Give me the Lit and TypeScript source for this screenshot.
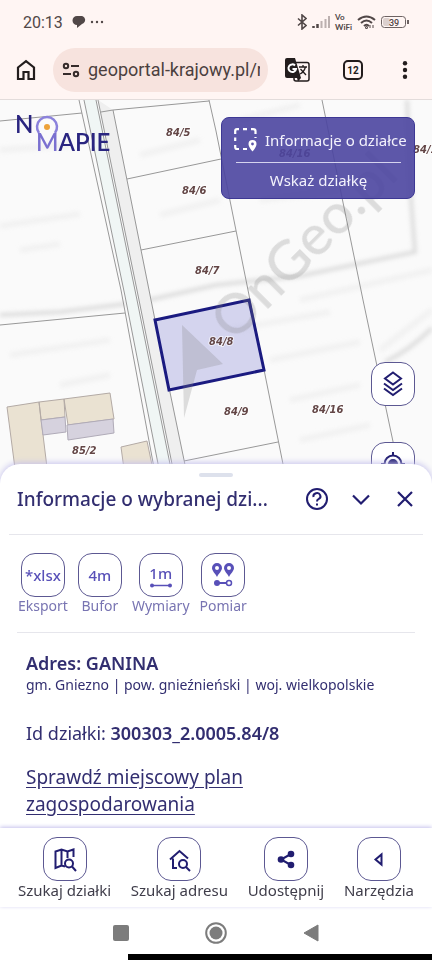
import { LitElement, html, svg, css } from "lit";
import { customElement } from "lit/decorators.js";

const parcelLabels: [number, number, string][] = [
  [166, 136, "84/5"],
  [182, 194, "84/6"],
  [195, 274, "84/7"],
  [209, 345, "84/8"],
  [224, 415, "84/9"],
  [312, 413, "84/16"],
  [279, 157, "84/16"],
  [413, 153, "84/1"],
  [72, 454, "85/2"],
];

const boundaries = [
  "M0 121L82 113",
  "M101 112L113 110L209 101",
  "M79 100L121 290L157 484",
  "M84 100L125 296L162 484",
  "M96 100L137 300L174 484",
  "M98 100L139 300L176 484",
  "M113 110L155 320L189 484",
  "M209 100L216 131L250 300L287 484",
  "M127 179L221 159",
  "M141 250L236 231",
  "M184 461L278 442",
  "M322 100L363 300L402 484",
  "M0 325L125 313",
];

@customElement("map-canvas")
export class MapCanvas extends LitElement {
  static styles = css`
    :host { display: block; }
    .map { display: block; width: 100%; height: 100%; background: #fafafa; }
    .relief { fill: none; stroke: #c4c4c4; stroke-width: 4; opacity: 0.55; filter: url(#soft); }
    .relief-light { fill: none; stroke: #ececec; stroke-width: 6; opacity: 0.6; filter: url(#soft); }
    .road { fill: #f0f6f5; }
    .verge { fill: #efefef; }
    .edge { fill: none; stroke: #989898; stroke-width: 1; }
    .house { fill: #eae2d2; stroke: #b3aaa5; stroke-width: 1; }
    .annex { fill: #d6d2de; stroke: #b0abb8; stroke-width: 1; }
    .mark { fill: #808080; opacity: 0.25; font: 500 56px Lato, sans-serif; }
    .selected { fill: #7070d0; fill-opacity: 0.27; stroke: #1a1a80; stroke-width: 3; }
    .label { font: italic bold 10px "DejaVu Sans", sans-serif; fill: #634646; stroke: #fff; stroke-width: 2; stroke-opacity: 0.6; paint-order: stroke; }
  `;

  render() {
    return html`<svg class="map" viewBox="0 100 432 384" preserveAspectRatio="xMidYMin slice" role="img" aria-label="Mapa działek">
      <defs><filter id="soft" x="-10%" y="-30%" width="120%" height="160%"><feGaussianBlur stdDeviation="2" /></filter></defs>
      <path class="relief-light" d="M0 150L70 145M0 226L80 214M20 250L60 244M10 355L110 340M60 385L110 375M270 360L360 342M290 400L360 385M230 330L330 312M140 155L200 140M160 215L220 200M240 120L300 105M260 200L340 190M300 300L432 270M380 350L432 310M300 440L370 425" />
      <path class="relief" d="M0 315L60 312L125 304M140 302L216 285L300 276L415 252L411 200L407 100" />
      <path class="relief" d="M385 362Q410 350 432 328" />
      <path class="verge" d="M98 100L113 110L189 484L176 484Z" />
      <path class="road" d="M84 100L96 100L137 300L174 484L162 484L125 296Z" />
      ${boundaries.map((d) => svg`<path class="edge" d=${d} />`)}
      <path class="house" d="M7 407L39 402L49 484H17ZM39 402L64 399L65 417L41 420ZM64 399L110 393L114 419L68 425ZM121 447L147 441L156 484H126Z" />
      <path class="annex" d="M41 420L65 417L66 432L43 435ZM67 425L113 419L114 433L68 440Z" />
      <path class="selected" d="M155 320L249 300L264 370L169 390Z" />
      <g class="mark">
        <path d="M182 325L223 364L197 370L184 418Z" />
        <text transform="translate(234 343) rotate(-45)">OnGeo.pl</text>
      </g>
      ${parcelLabels.map(([x, y, t]) => svg`<text class="label" x=${x} y=${y}>${t}</text>`)}
    </svg>`;
  }
}

const pin = (x: number) => svg`<path fill="#5850b8" fill-rule="evenodd" d="M${x} 10a5 5 0 0 0-5 5c0 3 3 5 5 9c2-4 5-6 5-9a5 5 0 0 0-5-5zm0 3a2 2 0 1 1 0 4a2 2 0 0 1 0-4z" />`;

const tools = [
  { label: "Eksport", face: html`<span class="glyph">*xlsx</span>` },
  { label: "Bufor", face: html`<span class="glyph">4m</span>` },
  {
    label: "Wymiary",
    face: html`<span class="stack"><span class="glyph">1m</span><svg width="24" height="5" viewBox="0 0 24 5"><path d="M2 2.500H22" stroke="#5850b8" stroke-width="1.500" /><circle cx="3" cy="2.500" r="2" fill="#5850b8" /><circle cx="21" cy="2.500" r="2" fill="#5850b8" /></svg></span>`,
  },
  {
    label: "Pomiar",
    face: html`<svg width="44" height="44" viewBox="0 0 44 44">${pin(16)}${pin(28)}<path d="M16 30H25" stroke="#5850b8" stroke-width="2" /><circle cx="16" cy="30" r="3" fill="#5850b8" /><circle cx="28" cy="30" r="2.500" fill="none" stroke="#5850b8" stroke-width="1.500" /></svg>`,
  },
];

const actions = [
  {
    label: "Szukaj działki",
    icon: svg`<path d="M22 29.500L18.500 28.500L12.500 31V14.500L18.500 12.500L24.500 14.500L30.500 12.500V20M18.500 12.500V28.500M24.500 14.500V21" /><circle cx="26" cy="26.500" r="4" /><path d="M29 29.500L33 34" />`,
  },
  {
    label: "Szukaj adresu",
    icon: svg`<path d="M20 31H16V21.500M13 22.500L22.500 14L31 21.500" /><circle cx="26" cy="27" r="4" /><path d="M29 30l4 4" />`,
  },
  {
    label: "Udostępnij",
    icon: svg`<path d="M27 17L17 22.500L27 28" /><g fill="#211d70" stroke="none"><circle cx="27" cy="17" r="3.300" /><circle cx="17" cy="22.500" r="3.300" /><circle cx="27" cy="28" r="3.300" /></g>`,
  },
  { label: "Narzędzia", icon: svg`<path d="M24.500 17.500V27.500L18.500 22.500Z" />` },
];

@customElement("app-root")
export class AppRoot extends LitElement {
  static styles = css`
    :host {
      display: flex; flex-direction: column; min-height: 100vh; background: #fff;
      font-family: "Noto Sans", sans-serif; color: #322e70;
    }
    * { box-sizing: border-box; }
    svg { display: block; flex: none; }
    button { font: inherit; color: inherit; background: none; border: 0; padding: 0; cursor: pointer; }
    p, h1, h2 { margin: 0; }

    .status {
      display: flex; align-items: center; height: 40px; padding: 4px 23px 0; gap: 5px;
      background: #fff5f3; color: #514747; font: 16px Roboto, sans-serif;
    }
    .clock { margin-right: 4px; }
    .spacer { flex: 1; }
    .vo { display: flex; flex-direction: column; font: 700 8px/10px Lato, sans-serif; }
    .browser {
      display: flex; align-items: center; height: 60px; padding: 0 16px; gap: 17px;
      background: #fff5f3; border-bottom: 1px solid #e3dcdb; color: #231d1d;
    }
    .address {
      display: flex; align-items: center; gap: 8px; flex: 1; min-width: 0; height: 44px;
      padding: 0 8px 0 9px; border-radius: 22px; background: #f7e3de;
    }
    .url {
      flex: 1; min-width: 0; border: 0; padding: 0; background: none; outline: none;
      font: 18px Roboto, sans-serif; color: #4b3f3e;
    }
    .right { display: flex; align-items: center; gap: 33px; }

    .stage { position: relative; flex: 1; min-height: 200px; margin-bottom: -20px; overflow: hidden; }
    .canvas { position: absolute; inset: 0; }
    .brand { position: absolute; left: 12px; top: 8px; }
    .logo { font: 600 24px Lato, sans-serif; fill: #2a2580; }
    .logo-m { fill: #7a70d0; }
    .hint {
      position: absolute; right: 17px; top: 17px; width: 194px; height: 82px; padding: 8px 9px 0 12px;
      border: 1px solid #3d3894; border-radius: 8px; background: rgba(75, 69, 160, 0.9);
      color: #f3f2fc; font-size: 15px; line-height: 28px;
    }
    .hint-row { display: flex; align-items: center; gap: 7px; white-space: nowrap; }
    .hint-foot { margin: 8px 4px 0 2px; border-top: 1px solid #d5d3ee; line-height: 34px; text-align: center; }
    .map-tools { position: absolute; right: 17px; top: 262px; display: flex; flex-direction: column; gap: 36px; }
    .square {
      display: flex; align-items: center; justify-content: center; width: 44px; height: 44px;
      border: 1px solid #5c5892; border-radius: 14px; background: #fff;
    }

    .sheet { position: relative; padding: 9px 9px 10px; border-radius: 20px 20px 0 0; background: #fff; box-shadow: 0 -1px 6px #c4c0ec; }
    .handle { width: 34px; height: 4px; margin: 0 auto; border-radius: 2px; background: #dde1ec; }
    .head { display: flex; align-items: center; height: 44px; padding: 0 6px 0 8px; }
    .title { flex: 1; font-size: 19px; font-weight: 500; white-space: nowrap; }
    .head-actions { display: flex; align-items: center; gap: 20px; }
    .tools { display: flex; gap: 10px; margin-top: 13px; padding: 18px 9px; border-top: 1px solid #e6e6ec; color: #7874b2; }
    .tool { display: flex; flex-direction: column; align-items: center; font-size: 14px; line-height: 17px; }
    .glyph { font-size: 15px; line-height: 20px; font-weight: 500; color: #5850b8; }
    .stack { display: flex; flex-direction: column; align-items: center; }
    .details { margin: 0 8px; padding: 18px 9px 0; border-top: 1px solid #e6e6ec; font-size: 18px; line-height: 27px; }
    .name { font-size: 18px; font-weight: 600; line-height: 24px; }
    .region { font-size: 14px; line-height: 20px; }
    .parcel { margin: 25px 0 17px; }
    .parcel strong { font-weight: 600; }
    .link { display: block; max-width: 260px; color: inherit; font-size: 19px; text-underline-offset: 3px; }

    .nav {
      position: relative; display: flex; justify-content: space-between; padding: 9px 18px 8px; background: #fff;
      box-shadow: 0 -1px 4px #c4c0ec; color: #3f3d4a;
    }
    .action { display: flex; flex-direction: column; align-items: center; font-size: 15px; line-height: 18px; white-space: nowrap; }
    .stroke { fill: none; stroke: #211d70; stroke-width: 2; }
    .system { display: flex; justify-content: center; align-items: center; gap: 76px; height: 47px; padding-top: 4px; }
    .strip { height: 6px; margin-left: 128px; background: #000; }
  `;

  render() {
    return html`
      <header class="status">
        <span class="clock">20:13</span>
        <svg width="32" height="12" viewBox="0 0 32 12" fill="#514747"><path d="M5 0h3a4 4 0 0 1 2 8L5 12V9A4.500 4.500 0 0 1 5 0z" /><circle cx="20" cy="6" r="1.200" /><circle cx="25" cy="6" r="1.200" /><circle cx="30" cy="6" r="1.200" /></svg>
        <span class="spacer"></span>
        <svg width="10" height="16" viewBox="0 0 10 16" fill="none" stroke="#514747" stroke-width="1.600"><path d="M1 4.500L9 11.500L5 15V1L9 4.500L1 11.500" /></svg>
        <svg width="18" height="12" viewBox="0 0 18 12"><path d="M1.500 12V10M5.500 12V8" stroke="#514747" stroke-width="2.500" /><path d="M9.500 12V5M13.500 12V3M17 12V0" stroke="#bcb0af" stroke-width="2" /></svg>
        <span class="vo"><span>Vo</span><span>WiFi</span></span>
        <svg width="19" height="14" viewBox="0 0 19 14" fill="none" stroke="#514747" stroke-width="2"><path d="M1 5Q9.500-2 18 5M4 8Q9.500 3 15 8M7 11Q9.500 8.500 12 11" /><circle cx="9.500" cy="12.500" r=".5" /><path d="M13 13V10M16 10V13" stroke-width="1" /></svg>
        <svg width="28" height="13" viewBox="0 0 28 13" role="img"><rect x=".5" y=".5" width="24" height="11" rx="3" fill="#fff5f3" stroke="#6d6262" /><rect x="2" y="2" width="7" height="8" rx="2" fill="#dcd0ce" /><rect x="26" y="4" width="2" height="4" fill="#6d6262" /><text x="8" y="10" font-family="Roboto" font-size="9" font-weight="500" fill="#514747">39</text></svg>
      </header>

      <div class="browser">
        <button aria-label="Strona główna"><svg width="20" height="22" viewBox="0 0 20 22" fill="none" stroke="#231d1d" stroke-width="2.200"><path d="M2 8.500L10 2.200L18 8.500V20H12.500V13H7.500V20H2Z" /></svg></button>
        <label class="address">
          <svg width="18" height="16" viewBox="0 0 18 16" fill="none" stroke="#352b2a" stroke-width="2"><circle cx="4" cy="4" r="2.200" /><path d="M9 4H17M1 12H9" /><circle cx="14" cy="12" r="2.200" /></svg>
          <input class="url" aria-label="Adres strony" value="geoportal-krajowy.pl/r" />
        </label>
        <div class="right">
          <button aria-label="Tłumacz"><svg width="25" height="24" viewBox="0 0 25 24"><rect x="9" y="4.500" width="15" height="18.500" rx="2" fill="#fff5f3" stroke="#231d1d" stroke-width="1.500" /><path d="M2 0H10L16 20H2Q0 20 0 18V2Q0 0 2 0Z" fill="#231d1d" /><path d="M12 20H16L13 23.500Z" fill="#231d1d" /><path d="M10 7.500A3.800 3.800 0 1 0 11 11H7.500" fill="none" stroke="#fff" stroke-width="2" /><path d="M14 9H22M18 7V9M20.500 9Q19 14 15 16M15.500 11L21 17" fill="none" stroke="#231d1d" stroke-width="1.300" /></svg></button>
          <button aria-label="Karty"><svg width="20" height="20" viewBox="0 0 20 20"><rect x="1" y="1" width="18" height="18" rx="4" fill="none" stroke="#231d1d" stroke-width="2" /><text x="10" y="13.500" text-anchor="middle" font-family="Roboto" font-size="10" font-weight="700" fill="#231d1d">12</text></svg></button>
          <button aria-label="Menu"><svg width="20" height="18" viewBox="0 0 20 18" fill="#231d1d"><circle cx="9" cy="2.200" r="2.200" /><circle cx="9" cy="9" r="2.200" /><circle cx="9" cy="15.800" r="2.200" /></svg></button>
        </div>
      </div>

      <main class="stage">
        <map-canvas class="canvas"></map-canvas>
        <svg class="brand logo" width="120" height="56" viewBox="0 0 120 56">
          <text x="3" y="25">N</text>
          <path d="M27 25A10 10 0 1 1 43 25" fill="none" stroke="#8b82dc" stroke-width="2.500" />
          <circle cx="35" cy="19" r="3" fill="#eda23a" />
          <text x="24" y="43"><tspan class="logo-m">M</tspan>APIE</text>
        </svg>
        <section class="hint">
          <div class="hint-row">
            <svg width="24" height="24" viewBox="0 0 24 24" fill="none" stroke="#fff" stroke-width="2.200"><path d="M1.200 6V3Q1.200 1.200 3 1.200H5M9 1.200H13M17 1.200H19Q21.500 1.200 21.500 3V6M1.200 9.500V13M1.200 17V19Q1.200 21 3 21H5M9 21H13M21.500 9V10" /><path fill="#fff" fill-rule="evenodd" stroke="none" d="M18.500 12a4 4 0 0 0-4 4c0 3 4 7.500 4 7.500s4-4.500 4-7.500a4 4 0 0 0-4-4zm0 2.600a1.400 1.400 0 1 1 0 2.800a1.400 1.400 0 0 1 0-2.800z" /></svg>
            <span>Informacje o działce</span>
          </div>
          <p class="hint-foot">Wskaż działkę</p>
        </section>
        <div class="map-tools">
          <button class="square" aria-label="Warstwy"><svg width="20" height="26" viewBox="0 0 20 26" fill="none" stroke="#211d70" stroke-width="2"><path d="M10 1.500L18 7.500L10 13.500L2 7.500ZM1 12.500L10 19L19 12.500M1 17.500L10 24L19 17.500" /></svg></button>
          <button class="square" aria-label="Moja lokalizacja"><svg width="24" height="24" viewBox="0 0 24 24" fill="none" stroke="#211d70" stroke-width="2"><circle cx="12" cy="12" r="8.500" /><circle cx="12" cy="12" r="4" fill="#211d70" /><path d="M12 0V4M12 20V24M0 12H4M20 12H24" /></svg></button>
        </div>
      </main>

      <section class="sheet">
        <div class="handle"></div>
        <div class="head">
          <h1 class="title">Informacje o wybranej dzi...</h1>
          <div class="head-actions">
            <button aria-label="Pomoc"><svg width="24" height="24" viewBox="0 0 24 24" fill="none" stroke="#211d70" stroke-width="2"><circle cx="12" cy="12" r="10" /><path d="M8.500 10A3.500 3.200 0 1 1 13.500 12.200Q12 13 12 14.500M12 16.500V18.500" /></svg></button>
            <button aria-label="Zwiń"><svg width="24" height="24" viewBox="0 0 24 24" fill="none" stroke="#211d70" stroke-width="2.200"><path d="M4 8.500L12 16.500L20 8.500" /></svg></button>
            <button aria-label="Zamknij"><svg width="24" height="24" viewBox="0 0 24 24" fill="none" stroke="#211d70" stroke-width="2.200"><path d="M5 5L19 19M19 5L5 19" /></svg></button>
          </div>
        </div>
        <div class="tools">
          ${tools.map((t) => html`<button class="tool"><span class="square">${t.face}</span><span>${t.label}</span></button>`)}
        </div>
        <div class="details">
          <h2 class="name">Adres: GANINA</h2>
          <p class="region">gm. Gniezno | pow. gnieźnieński | woj. wielkopolskie</p>
          <p class="parcel">Id działki: <strong>300303_2.0005.84/8</strong></p>
          <a class="link" href="#plan">Sprawdź miejscowy plan zagospodarowania</a>
        </div>
      </section>

      <nav class="nav">
        ${actions.map((a) => html`<button class="action"><span class="square"><svg class="stroke" width="44" height="44" viewBox="0 0 44 44">${a.icon}</svg></span><span>${a.label}</span></button>`)}
      </nav>

      <footer>
        <div class="system">
          <svg width="16" height="16" viewBox="0 0 16 16"><rect width="16" height="16" rx="2" fill="#7c7c7c" /></svg>
          <svg width="22" height="22" viewBox="0 0 22 22"><circle cx="11" cy="11" r="9.800" fill="none" stroke="#7c7c7c" stroke-width="2" /><circle cx="11" cy="11" r="6.500" fill="#7c7c7c" /></svg>
          <svg width="16" height="18" viewBox="0 0 16 18"><path d="M15 1V17L1 9Z" fill="#7c7c7c" stroke="#7c7c7c" stroke-linejoin="round" /></svg>
        </div>
        <div class="strip"></div>
      </footer>
    `;
  }
}
